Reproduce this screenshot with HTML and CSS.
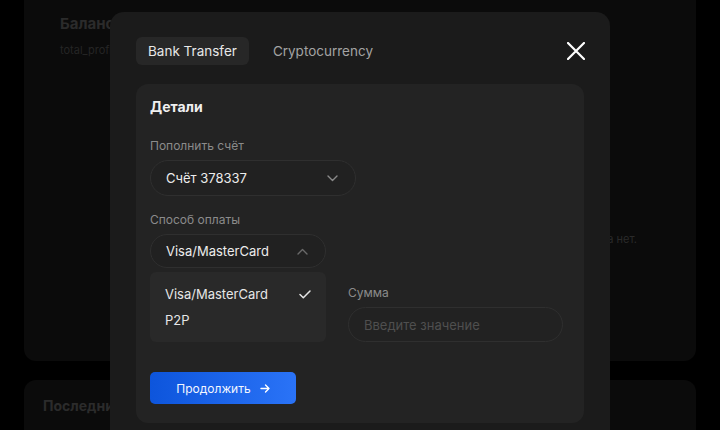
FILE: index.html
```html
<!DOCTYPE html>
<html lang="ru">
<head>
<meta charset="utf-8">
<link rel="stylesheet" href="styles.css">
</head>
<body>
<div class="page">
  <section class="bg-card bg-balance">
    <h2 class="bg-title">Баланс</h2>
    <p class="bg-sub">total_profit</p>
    <p class="bg-empty">Транзакций пока нет.</p>
  </section>
  <section class="bg-card bg-last">
    <h2 class="bg-title2">Последние операции</h2>
  </section>
</div>

<div class="modal">
  <div class="modal-head">
    <div class="tabs">
      <button class="tab tab-active">Bank Transfer</button>
      <button class="tab">Cryptocurrency</button>
    </div>
    <button class="close" aria-label="Закрыть">
      <svg width="18" height="18" viewBox="0 0 18 18"><path d="M1 1L17 17M17 1L1 17" stroke="#fff" stroke-width="2.2" stroke-linecap="round"/></svg>
    </button>
  </div>

  <div class="panel">
    <h3 class="panel-title">Детали</h3>

    <label class="label label-first">Пополнить счёт</label>
    <div class="select select-account">
      <span>Счёт 378337</span>
      <svg class="chev" width="11" height="7" viewBox="0 0 11 7"><path d="M1 1l4.5 4.5L10 1" fill="none" stroke="#8a8a8a" stroke-width="1.4" stroke-linecap="round" stroke-linejoin="round"/></svg>
    </div>

    <label class="label label-second">Способ оплаты</label>
    <div class="method-wrap">
      <div class="select select-method">
        <span>Visa/MasterCard</span>
        <svg class="chev" width="11" height="7" viewBox="0 0 11 7"><path d="M1 6l4.5-4.5L10 6" fill="none" stroke="#6a6a6a" stroke-width="1.4" stroke-linecap="round" stroke-linejoin="round"/></svg>
      </div>
      <ul class="dropdown">
        <li class="opt">Visa/MasterCard
          <svg width="12" height="9" viewBox="0 0 12 9"><path d="M1 4.5l3.3 3.3L11 1" fill="none" stroke="#e6e6e6" stroke-width="1.5" stroke-linecap="round" stroke-linejoin="round"/></svg>
        </li>
        <li class="opt">P2P</li>
      </ul>
    </div>

    <div class="row">
      <div class="col-left"></div>
      <div class="col-right">
        <label class="label">Сумма</label>
        <div class="input">Введите значение</div>
      </div>
    </div>

    <button class="submit">Продолжить <span class="arrow">
      <svg width="10" height="9" viewBox="0 0 10 9"><path d="M1 4.5h8M5.5 1L9 4.5 5.5 8" fill="none" stroke="#fff" stroke-width="1.4" stroke-linecap="round" stroke-linejoin="round"/></svg>
    </span></button>
  </div>
</div>
</body>
</html>
```

FILE: styles.css
```css
* { box-sizing: border-box; }
html, body { margin: 0; padding: 0; }
body {
  background: #000;
  width: 720px;
  height: 430px;
  overflow: hidden;
  font-family: Inter, "Noto Sans", sans-serif;
  position: relative;
}
.page {
  padding: 0 24px;
  display: flex;
  flex-direction: column;
  gap: 19px;
}
.bg-card {
  background: #0b0b0b;
  border-radius: 12px;
}
.bg-balance {
  height: 373px;
  margin-top: -12px;
  padding: 26px 36px 0;
  border-top-left-radius: 0;
  border-top-right-radius: 0;
}
.bg-title {
  margin: 0;
  font-size: 15px;
  font-weight: 700;
  color: #2b2b2b;
  line-height: 20px;
}
.bg-sub {
  margin: 9px 0 0;
  font-size: 11px;
  color: #252525;
  line-height: 14px;
}
.bg-empty {
  margin: 175px 0 0;
  text-align: right;
  padding-right: 23px;
  font-size: 11px;
  color: #2a2a2a;
  line-height: 14px;
}
.bg-last {
  height: 80px;
  padding: 17px 19px;
}
.bg-title2 {
  margin: 0;
  font-size: 14px;
  font-weight: 700;
  color: #2b2b2b;
}

.modal {
  position: absolute;
  left: 110px;
  top: 12px;
  width: 500px;
  height: 440px;
  background: #1b1b1b;
  border-radius: 14px;
  padding: 25px 26px 0;
}
.modal-head {
  display: flex;
  align-items: center;
  justify-content: space-between;
}
.tabs { display: flex; gap: 12px; }
.tab {
  border: 0;
  background: transparent;
  font-family: inherit;
  font-size: 13.5px;
  color: #a3a3a3;
  height: 28px;
  padding: 0 12px;
  border-radius: 6px;
}
.tab-active {
  background: #272727;
  color: #e8e8e8;
}
.close {
  border: 0;
  background: transparent;
  padding: 0;
  width: 18px;
  height: 18px;
  margin-right: -1px;
  display: flex;
}

.panel {
  margin-top: 19px;
  background: #232323;
  border-radius: 12px;
  padding: 15px 14px 19px;
}
.panel-title {
  margin: 0;
  font-size: 14px;
  line-height: 16px;
  font-weight: 700;
  color: #efefef;
}
.label {
  display: block;
  font-size: 12px;
  line-height: 16px;
  color: #8b8b8b;
  margin-bottom: 6px;
}
.label-first { margin-top: 23px; }
.label-second { margin-top: 16px; }
.select {
  display: flex;
  align-items: center;
  justify-content: space-between;
  border: 1px solid #2f2f2f;
  background: #212121;
  border-radius: 20px;
  color: #ececec;
  font-size: 13px;
  padding: 0 17px 0 15px;
}
.select-account { width: 206px; height: 36px; }
.select-method { width: 176px; height: 34px; }
.method-wrap { position: relative; }
.dropdown {
  position: absolute;
  left: 0;
  top: 38px;
  width: 176px;
  height: 70px;
  margin: 0;
  list-style: none;
  background: #292929;
  border-radius: 6px;
  padding: 9px 15px 0 15px;
  z-index: 2;
}
.opt {
  display: flex;
  align-items: center;
  justify-content: space-between;
  height: 26px;
  font-size: 13px;
  color: #e6e6e6;
}
.row {
  display: flex;
  gap: 22px;
  margin-top: 17px;
}
.col-left { width: 176px; }
.col-right { width: 215px; }
.input {
  height: 35px;
  border: 1px solid #2f2f2f;
  border-radius: 18px;
  background: #222;
  color: #4f4f4f;
  font-size: 13px;
  display: flex;
  align-items: center;
  padding-left: 15px;
}
.submit {
  margin-top: 30px;
  width: 146px;
  height: 32px;
  border: 0;
  border-radius: 5px;
  background: linear-gradient(90deg, #0d55dc, #2a73f7);
  color: #f2f6ff;
  font-family: inherit;
  font-size: 12px;
  display: flex;
  align-items: center;
  justify-content: center;
  gap: 9px;
  padding: 0;
}
.arrow { display: flex; }
```
